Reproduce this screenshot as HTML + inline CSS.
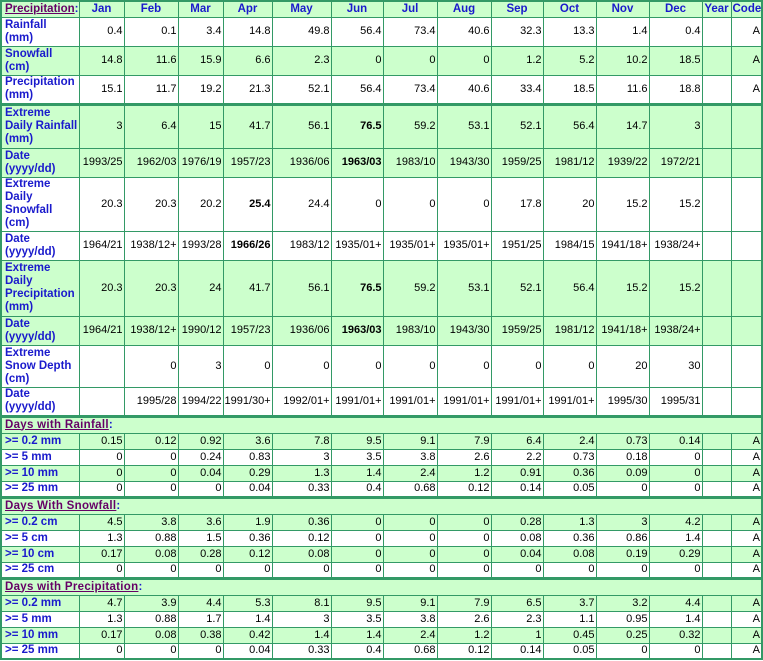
<!DOCTYPE html>
<html><head><meta charset="utf-8"><style>
body{margin:0;background:#fff;}
table{border-collapse:collapse;table-layout:fixed;width:761px;border:2px solid #339966;font-family:"Liberation Sans",Tahoma,sans-serif;font-size:11px;}
td,th{border:1px solid #339966;padding:0 1px;line-height:13px;text-align:right;color:#000;overflow:hidden;white-space:nowrap;}
th{color:#1a1acc;font-weight:bold;text-align:center;background:#ccffcc;font-size:11.5px;}
td.l{color:#1a1acc;font-weight:bold;text-align:left;padding-left:3px;font-size:11.5px;}
tr.g td{background:#ccffcc;}
tr.t td,tr.t th{border-top:3px solid #339966;}
.s{color:#660066;text-decoration:underline;font-weight:bold;}
.c{color:#1a1acc;font-weight:bold;}
b{font-weight:bold;}
tr.h td{height:15px;text-align:left;padding-left:3px;background:#ccffcc;font-size:11.5px;letter-spacing:0.3px;}
</style></head><body>
<table>
<colgroup><col style="width:78px"><col style="width:45px"><col style="width:54px"><col style="width:45px"><col style="width:49px"><col style="width:59px"><col style="width:52px"><col style="width:54px"><col style="width:54px"><col style="width:52px"><col style="width:53px"><col style="width:53px"><col style="width:53px"><col style="width:29px"><col style="width:31px"></colgroup>
<tr style="height:16px"><th style="text-align:left;padding-left:3px"><span class="s">Precipitation</span>:</th><th>Jan</th><th>Feb</th><th>Mar</th><th>Apr</th><th>May</th><th>Jun</th><th>Jul</th><th>Aug</th><th>Sep</th><th>Oct</th><th>Nov</th><th>Dec</th><th>Year</th><th>Code</th></tr>
<tr style="height:29px"><td class="l">Rainfall<br>(mm)</td><td>0.4</td><td>0.1</td><td>3.4</td><td>14.8</td><td>49.8</td><td>56.4</td><td>73.4</td><td>40.6</td><td>32.3</td><td>13.3</td><td>1.4</td><td>0.4</td><td></td><td>A</td></tr>
<tr class="g" style="height:29px"><td class="l">Snowfall<br>(cm)</td><td>14.8</td><td>11.6</td><td>15.9</td><td>6.6</td><td>2.3</td><td>0</td><td>0</td><td>0</td><td>1.2</td><td>5.2</td><td>10.2</td><td>18.5</td><td></td><td>A</td></tr>
<tr style="height:29px"><td class="l">Precipitation<br>(mm)</td><td>15.1</td><td>11.7</td><td>19.2</td><td>21.3</td><td>52.1</td><td>56.4</td><td>73.4</td><td>40.6</td><td>33.4</td><td>18.5</td><td>11.6</td><td>18.8</td><td></td><td>A</td></tr>
<tr class="g t" style="height:44px"><td class="l">Extreme<br>Daily Rainfall<br>(mm)</td><td>3</td><td>6.4</td><td>15</td><td>41.7</td><td>56.1</td><td><b>76.5</b></td><td>59.2</td><td>53.1</td><td>52.1</td><td>56.4</td><td>14.7</td><td>3</td><td></td><td></td></tr>
<tr class="g" style="height:29px"><td class="l">Date<br>(yyyy/dd)</td><td>1993/25</td><td>1962/03</td><td>1976/19</td><td>1957/23</td><td>1936/06</td><td><b>1963/03</b></td><td>1983/10</td><td>1943/30</td><td>1959/25</td><td>1981/12</td><td>1939/22</td><td>1972/21</td><td></td><td></td></tr>
<tr style="height:54px"><td class="l">Extreme<br>Daily<br>Snowfall<br>(cm)</td><td>20.3</td><td>20.3</td><td>20.2</td><td><b>25.4</b></td><td>24.4</td><td>0</td><td>0</td><td>0</td><td>17.8</td><td>20</td><td>15.2</td><td>15.2</td><td></td><td></td></tr>
<tr style="height:29px"><td class="l">Date<br>(yyyy/dd)</td><td>1964/21</td><td>1938/12+</td><td>1993/28</td><td><b>1966/26</b></td><td>1983/12</td><td>1935/01+</td><td>1935/01+</td><td>1935/01+</td><td>1951/25</td><td>1984/15</td><td>1941/18+</td><td>1938/24+</td><td></td><td></td></tr>
<tr class="g" style="height:56px"><td class="l">Extreme<br>Daily<br>Precipitation<br>(mm)</td><td>20.3</td><td>20.3</td><td>24</td><td>41.7</td><td>56.1</td><td><b>76.5</b></td><td>59.2</td><td>53.1</td><td>52.1</td><td>56.4</td><td>15.2</td><td>15.2</td><td></td><td></td></tr>
<tr class="g" style="height:29px"><td class="l">Date<br>(yyyy/dd)</td><td>1964/21</td><td>1938/12+</td><td>1990/12</td><td>1957/23</td><td>1936/06</td><td><b>1963/03</b></td><td>1983/10</td><td>1943/30</td><td>1959/25</td><td>1981/12</td><td>1941/18+</td><td>1938/24+</td><td></td><td></td></tr>
<tr style="height:42px"><td class="l">Extreme<br>Snow Depth<br>(cm)</td><td></td><td>0</td><td>3</td><td>0</td><td>0</td><td>0</td><td>0</td><td>0</td><td>0</td><td>0</td><td>20</td><td>30</td><td></td><td></td></tr>
<tr style="height:29px"><td class="l">Date<br>(yyyy/dd)</td><td></td><td>1995/28</td><td>1994/22</td><td>1991/30+</td><td>1992/01+</td><td>1991/01+</td><td>1991/01+</td><td>1991/01+</td><td>1991/01+</td><td>1991/01+</td><td>1995/30</td><td>1995/31</td><td></td><td></td></tr>
<tr class="h t"><td colspan="15"><span class="s">Days with Rainfall</span><span class="c">:</span></td></tr>
<tr class="g" style="height:16px"><td class="l">&gt;= 0.2 mm</td><td>0.15</td><td>0.12</td><td>0.92</td><td>3.6</td><td>7.8</td><td>9.5</td><td>9.1</td><td>7.9</td><td>6.4</td><td>2.4</td><td>0.73</td><td>0.14</td><td></td><td>A</td></tr>
<tr style="height:16px"><td class="l">&gt;= 5 mm</td><td>0</td><td>0</td><td>0.24</td><td>0.83</td><td>3</td><td>3.5</td><td>3.8</td><td>2.6</td><td>2.2</td><td>0.73</td><td>0.18</td><td>0</td><td></td><td>A</td></tr>
<tr class="g" style="height:16px"><td class="l">&gt;= 10 mm</td><td>0</td><td>0</td><td>0.04</td><td>0.29</td><td>1.3</td><td>1.4</td><td>2.4</td><td>1.2</td><td>0.91</td><td>0.36</td><td>0.09</td><td>0</td><td></td><td>A</td></tr>
<tr style="height:16px"><td class="l">&gt;= 25 mm</td><td>0</td><td>0</td><td>0</td><td>0.04</td><td>0.33</td><td>0.4</td><td>0.68</td><td>0.12</td><td>0.14</td><td>0.05</td><td>0</td><td>0</td><td></td><td>A</td></tr>
<tr class="h t"><td colspan="15"><span class="s">Days With Snowfall</span><span class="c">:</span></td></tr>
<tr class="g" style="height:16px"><td class="l">&gt;= 0.2 cm</td><td>4.5</td><td>3.8</td><td>3.6</td><td>1.9</td><td>0.36</td><td>0</td><td>0</td><td>0</td><td>0.28</td><td>1.3</td><td>3</td><td>4.2</td><td></td><td>A</td></tr>
<tr style="height:16px"><td class="l">&gt;= 5 cm</td><td>1.3</td><td>0.88</td><td>1.5</td><td>0.36</td><td>0.12</td><td>0</td><td>0</td><td>0</td><td>0.08</td><td>0.36</td><td>0.86</td><td>1.4</td><td></td><td>A</td></tr>
<tr class="g" style="height:16px"><td class="l">&gt;= 10 cm</td><td>0.17</td><td>0.08</td><td>0.28</td><td>0.12</td><td>0.08</td><td>0</td><td>0</td><td>0</td><td>0.04</td><td>0.08</td><td>0.19</td><td>0.29</td><td></td><td>A</td></tr>
<tr style="height:16px"><td class="l">&gt;= 25 cm</td><td>0</td><td>0</td><td>0</td><td>0</td><td>0</td><td>0</td><td>0</td><td>0</td><td>0</td><td>0</td><td>0</td><td>0</td><td></td><td>A</td></tr>
<tr class="h t"><td colspan="15"><span class="s">Days with Precipitation</span><span class="c">:</span></td></tr>
<tr class="g" style="height:16px"><td class="l">&gt;= 0.2 mm</td><td>4.7</td><td>3.9</td><td>4.4</td><td>5.3</td><td>8.1</td><td>9.5</td><td>9.1</td><td>7.9</td><td>6.5</td><td>3.7</td><td>3.2</td><td>4.4</td><td></td><td>A</td></tr>
<tr style="height:16px"><td class="l">&gt;= 5 mm</td><td>1.3</td><td>0.88</td><td>1.7</td><td>1.4</td><td>3</td><td>3.5</td><td>3.8</td><td>2.6</td><td>2.3</td><td>1.1</td><td>0.95</td><td>1.4</td><td></td><td>A</td></tr>
<tr class="g" style="height:16px"><td class="l">&gt;= 10 mm</td><td>0.17</td><td>0.08</td><td>0.38</td><td>0.42</td><td>1.4</td><td>1.4</td><td>2.4</td><td>1.2</td><td>1</td><td>0.45</td><td>0.25</td><td>0.32</td><td></td><td>A</td></tr>
<tr style="height:16px"><td class="l">&gt;= 25 mm</td><td>0</td><td>0</td><td>0</td><td>0.04</td><td>0.33</td><td>0.4</td><td>0.68</td><td>0.12</td><td>0.14</td><td>0.05</td><td>0</td><td>0</td><td></td><td>A</td></tr>
</table>
</body></html>
